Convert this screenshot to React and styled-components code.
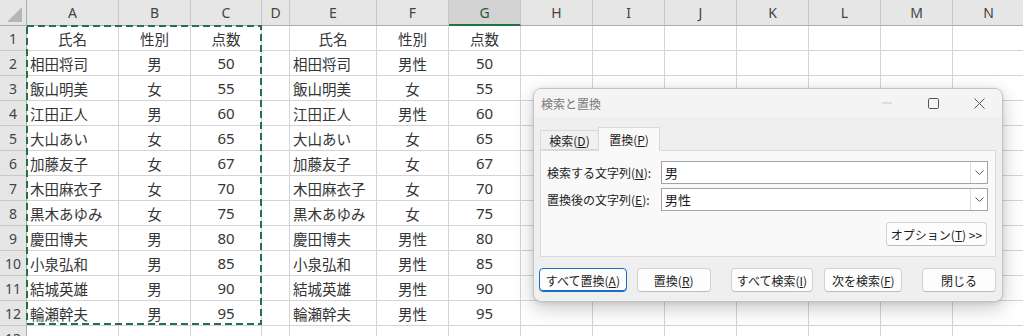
import React from "react";
import styled, { createGlobalStyle, css } from "styled-components";

const GlobalStyle = createGlobalStyle`
  html, body {
    margin: 0;
    padding: 0;
    background: #ffffff;
  }
  #root {
    width: 1023px;
    height: 336px;
    overflow: hidden;
  }
`;

const COLS = ["A", "B", "C", "D", "E", "F", "G", "H", "I", "J", "K", "L", "M", "N"];
const WIDTHS = [27, 92, 72, 71, 28, 87, 72, 72, 72, 72, 72, 72, 72, 72, 72];

const rows = [
  ["氏名", "性別", "点数", "氏名", "性別", "点数"],
  ["相田将司", "男", "50", "男性"],
  ["飯山明美", "女", "55", "女"],
  ["江田正人", "男", "60", "男性"],
  ["大山あい", "女", "65", "女"],
  ["加藤友子", "女", "67", "女"],
  ["木田麻衣子", "女", "70", "女"],
  ["黒木あゆみ", "女", "75", "女"],
  ["慶田博夫", "男", "80", "男性"],
  ["小泉弘和", "男", "85", "男性"],
  ["結城英雄", "男", "90", "男性"],
  ["輪瀬幹夫", "男", "95", "男性"],
];

const Page = styled.div`
  position: relative;
  width: 1023px;
  height: 336px;
  overflow: hidden;
  background: #fff;
`;

const Sheet = styled.div`
  display: grid;
  grid-template-columns: ${WIDTHS.map((w) => w + "px").join(" ")};
  grid-template-rows: 26px;
  grid-auto-rows: 25px;
  font-family: "Noto Sans CJK JP", "Noto Sans", sans-serif;
`;

const ColHead = styled.div`
  box-sizing: border-box;
  background: ${(p) => (p.$selected ? "#d3d3d3" : "#e6e6e6")};
  border-right: 1px solid #c8c8c8;
  border-bottom: ${(p) => (p.$selected ? "2px solid #217346" : "1px solid #ababab")};
  color: ${(p) => (p.$selected ? "#1e5c39" : "#444")};
  font-family: "Noto Sans", sans-serif;
  font-size: 14px;
  display: flex;
  align-items: center;
  justify-content: center;
  padding-top: ${(p) => (p.$selected ? "1px" : "0")};
`;

const Corner = styled.div`
  position: relative;
  box-sizing: border-box;
  background: #e6e6e6;
  border-right: 1px solid #ababab;
  border-bottom: 1px solid #ababab;

  &::after {
    content: "";
    position: absolute;
    right: 4px;
    bottom: 3px;
    width: 15px;
    height: 15px;
    background: #b6b6b6;
    clip-path: polygon(100% 0, 100% 100%, 0 100%);
  }
`;

const RowHead = styled.div`
  box-sizing: border-box;
  background: #e6e6e6;
  border-right: 1px solid #ababab;
  border-bottom: 1px solid #c8c8c8;
  color: #444;
  font-family: "Noto Sans", sans-serif;
  font-size: 14px;
  display: flex;
  align-items: center;
  justify-content: center;
`;

const Cell = styled.div`
  box-sizing: border-box;
  border-right: 1px solid #d4d4d4;
  border-bottom: 1px solid #d4d4d4;
  color: #353535;
  font-size: 14.5px;
  display: flex;
  align-items: center;
  white-space: nowrap;
  overflow: hidden;
  padding: 0 3px;
  justify-content: ${(p) => (p.$align === "center" ? "center" : "flex-start")};
  ${(p) =>
    p.$num &&
    css`
      font-family: "Noto Sans", sans-serif;
      font-size: 15px;
    `}
`;

const Ants = styled.svg`
  position: absolute;
  left: 26px;
  top: 25px;
  pointer-events: none;
`;

/* ---------- dialog ---------- */

const Dialog = styled.div`
  position: absolute;
  left: 533px;
  top: 88px;
  width: 470px;
  height: 214px;
  box-sizing: border-box;
  border: 1px solid #c2c2c2;
  border-radius: 8px;
  background: #efefef;
  box-shadow: 0 6px 20px rgba(0, 0, 0, 0.22), 0 1px 4px rgba(0, 0, 0, 0.1);
  overflow: hidden;
  display: flex;
  flex-direction: column;
  font-family: "Noto Sans CJK JP", "Noto Sans", sans-serif;
  color: #1b1b1b;
`;

const TitleBar = styled.div`
  height: 28px;
  flex: none;
  display: flex;
  align-items: center;
  background: #f4f4f4;
  padding-left: 7px;
`;

const Title = styled.span`
  font-size: 12px;
  color: #7a7a7a;
  flex: 1;
`;

const WinBtn = styled.div`
  width: 46px;
  height: 28px;
  display: flex;
  align-items: center;
  justify-content: center;
`;

const Body = styled.div`
  padding: 0 6px;
  display: flex;
  flex-direction: column;
`;

const Tabs = styled.div`
  height: 33px;
  display: flex;
  align-items: flex-end;
`;

const Tab = styled.div`
  position: relative;
  z-index: ${(p) => (p.$active ? 2 : 1)};
  box-sizing: border-box;
  width: ${(p) => (p.$active ? "62px" : "59px")};
  height: ${(p) => (p.$active ? "24px" : "20px")};
  margin-bottom: ${(p) => (p.$active ? "-1px" : "0")};
  background: ${(p) => (p.$active ? "#f9f9f9" : "#f0f0f0")};
  border: 1px solid #d9d9d9;
  border-bottom: ${(p) => (p.$active ? "none" : "1px solid #d9d9d9")};
  margin-left: ${(p) => (p.$active ? "-1px" : "0")};
  font-size: 12px;
  display: flex;
  align-items: center;
  justify-content: center;
`;

const Panel = styled.div`
  position: relative;
  z-index: 1;
  box-sizing: border-box;
  height: 107px;
  background: #f9f9f9;
  border: 1px solid #d9d9d9;
  padding: 10px 7px 0 6px;
  display: flex;
  flex-direction: column;
`;

const FieldRow = styled.div`
  display: flex;
  align-items: center;
  height: 23px;
  & + & {
    margin-top: 4px;
  }
`;

const Label = styled.label`
  width: 114px;
  flex: none;
  font-size: 12px;
`;

const Combo = styled.div`
  flex: 1;
  height: 23px;
  box-sizing: border-box;
  border: 1px solid #a3a3a3;
  background: #fff;
  display: flex;
  align-items: stretch;
`;

const ComboText = styled.div`
  flex: 1;
  font-size: 13px;
  padding-left: 3px;
  display: flex;
  align-items: center;
`;

const ComboArrow = styled.div`
  width: 16px;
  border-left: 1px solid #dcdcdc;
  display: flex;
  align-items: center;
  justify-content: center;
`;

const OptionRow = styled.div`
  display: flex;
  justify-content: flex-end;
  margin-top: 11px;
  padding-right: 1px;
`;

const Button = styled.div`
  box-sizing: border-box;
  width: ${(p) => p.$w}px;
  height: 24px;
  margin-left: ${(p) => p.$ml || 0}px;
  background: #fdfdfd;
  border: 1px solid ${(p) => (p.$focused ? "#1a6fc4" : "#d2d2d2")};
  border-bottom-color: ${(p) => (p.$focused ? "#1a6fc4" : "#bdbdbd")};
  box-shadow: ${(p) => (p.$focused ? "inset 0 -1px 0 #1a6fc4" : "none")};
  border-radius: 4px;
  font-size: 12px;
  display: flex;
  align-items: center;
  justify-content: center;
  white-space: nowrap;
`;

const ButtonRow = styled.div`
  display: flex;
  margin-top: 11px;
  margin-left: -1px;
`;

const Chevron = () => (
  <svg width="9" height="5" viewBox="0 0 9 5">
    <path d="M0.5 0.5 L4.5 4.5 L8.5 0.5" fill="none" stroke="#555" strokeWidth="1" />
  </svg>
);

const cellAlign = (colIdx, rowIdx) => {
  // A and E hold names: left aligned below the header
  if (colIdx === 0 || colIdx === 4) return rowIdx === 0 ? "center" : "left";
  return "center";
};

const valueFor = (colIdx, r) => {
  const row = rows[r];
  if (!row) return "";
  if (r === 0) {
    const map = { 0: row[0], 1: row[1], 2: row[2], 4: row[3], 5: row[4], 6: row[5] };
    return map[colIdx] || "";
  }
  const map = { 0: row[0], 1: row[1], 2: row[2], 4: row[0], 5: row[3], 6: row[2] };
  return map[colIdx] || "";
};

export default function App() {
  const bodyRows = Array.from({ length: 13 }, (_, i) => i);
  return (
    <>
      <GlobalStyle />
      <Page>
        <Sheet>
          <Corner />
          {COLS.map((c) => (
            <ColHead key={c} $selected={c === "G"}>
              {c}
            </ColHead>
          ))}
          {bodyRows.map((r) => (
            <React.Fragment key={r}>
              <RowHead>{r + 1}</RowHead>
              {COLS.map((c, ci) => {
                const v = valueFor(ci, r);
                return (
                  <Cell key={c} $align={cellAlign(ci, r)} $num={/^\d+$/.test(v)}>
                    {v}
                  </Cell>
                );
              })}
            </React.Fragment>
          ))}
        </Sheet>

        <Ants width="236" height="300">
          <rect
            x="1"
            y="1"
            width="234"
            height="298"
            fill="none"
            stroke="#217346"
            strokeWidth="2"
            strokeDasharray="7 4"
          />
        </Ants>

        <Dialog>
          <TitleBar>
            <Title>検索と置換</Title>
            <WinBtn>
              <svg width="10" height="2" viewBox="0 0 10 2">
                <line x1="0" y1="1" x2="10" y2="1" stroke="#c4c4c4" strokeWidth="1" />
              </svg>
            </WinBtn>
            <WinBtn>
              <svg width="11" height="11" viewBox="0 0 11 11">
                <rect x="0.5" y="0.5" width="10" height="10" rx="1.2" fill="none" stroke="#555" strokeWidth="1" />
              </svg>
            </WinBtn>
            <WinBtn>
              <svg width="11" height="11" viewBox="0 0 11 11">
                <path d="M0.5 0.5 L10.5 10.5 M10.5 0.5 L0.5 10.5" stroke="#555" strokeWidth="1" />
              </svg>
            </WinBtn>
          </TitleBar>
          <Body>
            <Tabs>
              <Tab>
                検索(<u>D</u>)
              </Tab>
              <Tab $active>
                置換(<u>P</u>)
              </Tab>
            </Tabs>
            <Panel>
              <FieldRow>
                <Label>
                  検索する文字列(<u>N</u>):
                </Label>
                <Combo>
                  <ComboText>男</ComboText>
                  <ComboArrow>
                    <Chevron />
                  </ComboArrow>
                </Combo>
              </FieldRow>
              <FieldRow>
                <Label>
                  置換後の文字列(<u>E</u>):
                </Label>
                <Combo>
                  <ComboText>男性</ComboText>
                  <ComboArrow>
                    <Chevron />
                  </ComboArrow>
                </Combo>
              </FieldRow>
              <OptionRow>
                <Button $w={101}>
                  オプション(<u>T</u>)&nbsp;&gt;&gt;
                </Button>
              </OptionRow>
            </Panel>
            <ButtonRow>
              <Button $w={88} $focused>
                すべて置換(<u>A</u>)
              </Button>
              <Button $w={74} $ml={10}>
                置換(<u>R</u>)
              </Button>
              <Button $w={83} $ml={20}>
                すべて検索(<u>I</u>)
              </Button>
              <Button $w={78} $ml={11}>
                次を検索(<u>F</u>)
              </Button>
              <Button $w={74} $ml={20}>
                閉じる
              </Button>
            </ButtonRow>
          </Body>
        </Dialog>
      </Page>
    </>
  );
}
